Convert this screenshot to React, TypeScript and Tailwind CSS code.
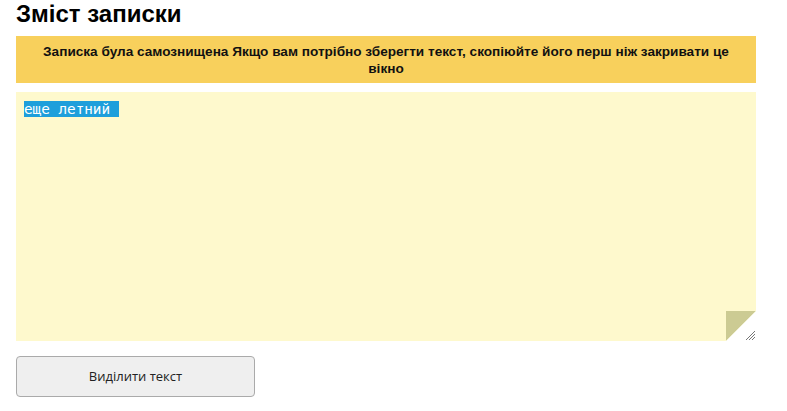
export default function App() {
  return (
    <div className="min-h-screen bg-white px-4 font-['Liberation_Sans',Arial,sans-serif] text-black">
      <h1 className="pt-[1px] text-[24px] font-bold leading-[26px]">Зміст записки</h1>

      <div className="mt-[9px] w-[740px] bg-[#f8d05c] px-[10px] pb-[6px] pt-[7px] text-center text-[13.6px] font-bold leading-[17px] text-[#111]">
        Записка була самознищена Якщо вам потрібно зберегти текст, скопіюйте його перш ніж закривати це вікно
      </div>

      <div className="relative mt-[9px] h-[249px] w-[740px] bg-[#fef9cd] px-2 py-[9px]">
        <div className="whitespace-pre font-['DejaVu_Sans_Mono',monospace] text-[14.3px] leading-[16px] text-white">
          <span className="bg-[#1e9fdb]">еще летний </span>
        </div>

        {/* folded corner + resize grip */}
        <svg
          className="absolute bottom-0 right-0"
          width="30"
          height="30"
          viewBox="0 0 30 30"
        >
          <polygon points="0,0 30,0 0,30" fill="#cccb93" />
          <polygon points="30,0 30,30 0,30" fill="#ffffff" />
          <g stroke="#777" strokeWidth="1">
            <line x1="29" y1="20" x2="20" y2="29" />
            <line x1="29" y1="23" x2="23" y2="29" />
            <line x1="29" y1="26" x2="26" y2="29" />
          </g>
        </svg>
      </div>

      <button className="mt-[15px] h-[41px] w-[239px] rounded-[4px] border border-[#aaa] bg-[#efefef] font-['Open_Sans',sans-serif] text-[13px] text-[#222]">
        Виділити текст
      </button>
    </div>
  );
}
